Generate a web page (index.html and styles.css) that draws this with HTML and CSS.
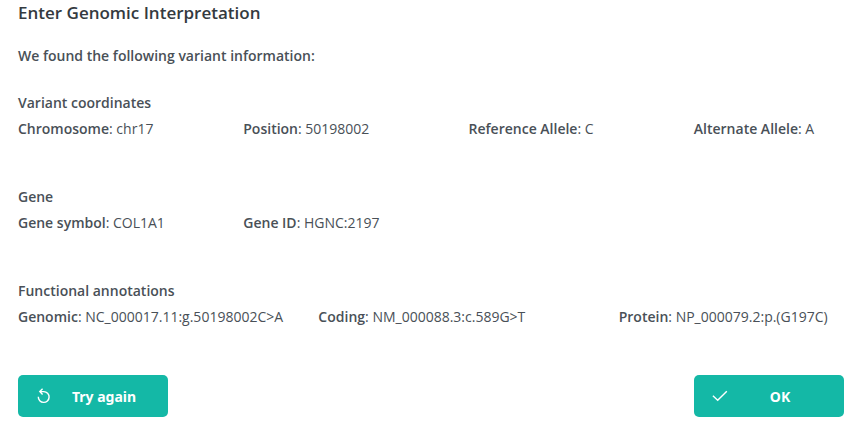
FILE: index.html
```html
<!DOCTYPE html>
<html lang="en">
<head>
<meta charset="utf-8">
<meta name="viewport" content="width=device-width, initial-scale=1">
<title>Enter Genomic Interpretation</title>
<link rel="stylesheet" href="styles.css">
</head>
<body>
<main class="dialog">
  <h1 class="title">Enter Genomic Interpretation</h1>
  <p class="lead">We found the following variant information:</p>

  <section class="group">
    <h2 class="heading">Variant coordinates</h2>
    <div class="grid">
      <div class="field"><b>Chromosome</b>: chr17</div>
      <div class="field"><b>Position</b>: 50198002</div>
      <div class="field"><b>Reference Allele</b>: C</div>
      <div class="field narrow"><b>Alternate Allele</b>: A</div>
    </div>
  </section>

  <section class="group">
    <h2 class="heading">Gene</h2>
    <div class="grid">
      <div class="field"><b>Gene symbol</b>: COL1A1</div>
      <div class="field"><b>Gene ID</b>: HGNC:2197</div>
    </div>
  </section>

  <section class="group">
    <h2 class="heading">Functional annotations</h2>
    <div class="grid">
      <div class="field wide"><b>Genomic</b>: NC_000017.11:g.50198002C&gt;A</div>
      <div class="field wide"><b>Coding</b>: NM_000088.3:c.589G&gt;T</div>
      <div class="field"><b>Protein</b>: NP_000079.2:p.(G197C)</div>
    </div>
  </section>

  <footer class="actions">
    <button class="button" type="button">
      <svg class="icon" viewBox="0 0 16 16" aria-hidden="true"><path d="M4 3.6H7.8A5.4 5.4 0 1 1 2.3 8.8M6.6 .8L3.8 3.6L6.6 6.4"/></svg>
      <span class="label">Try again</span>
    </button>
    <button class="button" type="button">
      <svg class="icon" viewBox="0 0 16 16" aria-hidden="true"><path d="M.9 7.8L5.7 12.3L14.8 3.2"/></svg>
      <span class="label">OK</span>
    </button>
  </footer>
</main>
</body>
</html>
```
FILE: styles.css
```css
* {
  box-sizing: border-box;
}

body {
  margin: 0;
  background: #fff;
  color: #495057;
  font: 14px/20px "Open Sans", "Noto Sans", sans-serif;
}

b {
  font-weight: 600;
}

.dialog {
  padding: 0 7px 8px 18px;
}

.title {
  margin: 0;
  color: #343a40;
  font-size: 17px;
  font-weight: 600;
  line-height: 26px;
}

.lead {
  margin: 20px 0 27px;
  font-weight: 600;
}

.group {
  margin-bottom: 48px;
}

.heading {
  margin: 0 0 6px;
  font-size: 14px;
  font-weight: 600;
  line-height: 20px;
}

.grid {
  display: grid;
  grid-template-columns: repeat(11, minmax(0, 1fr));
}

.field {
  grid-column: span 3;
  white-space: nowrap;
}

.wide {
  grid-column: span 4;
}

.narrow {
  grid-column: span 2;
}

.actions {
  display: flex;
  justify-content: space-between;
}

.button {
  display: flex;
  align-items: center;
  width: 150px;
  height: 42px;
  padding: 0 12px 0 18px;
  border: 0;
  border-radius: 5px;
  background: #14b8a6;
  color: #fff;
  font: 700 14px/20px "Noto Sans", sans-serif;
}

.icon {
  width: 16px;
  height: 16px;
  fill: none;
  stroke: currentColor;
  stroke-width: 1.4;
}

.label {
  flex: 1;
  padding-top: 2px;
  text-align: center;
}
```
